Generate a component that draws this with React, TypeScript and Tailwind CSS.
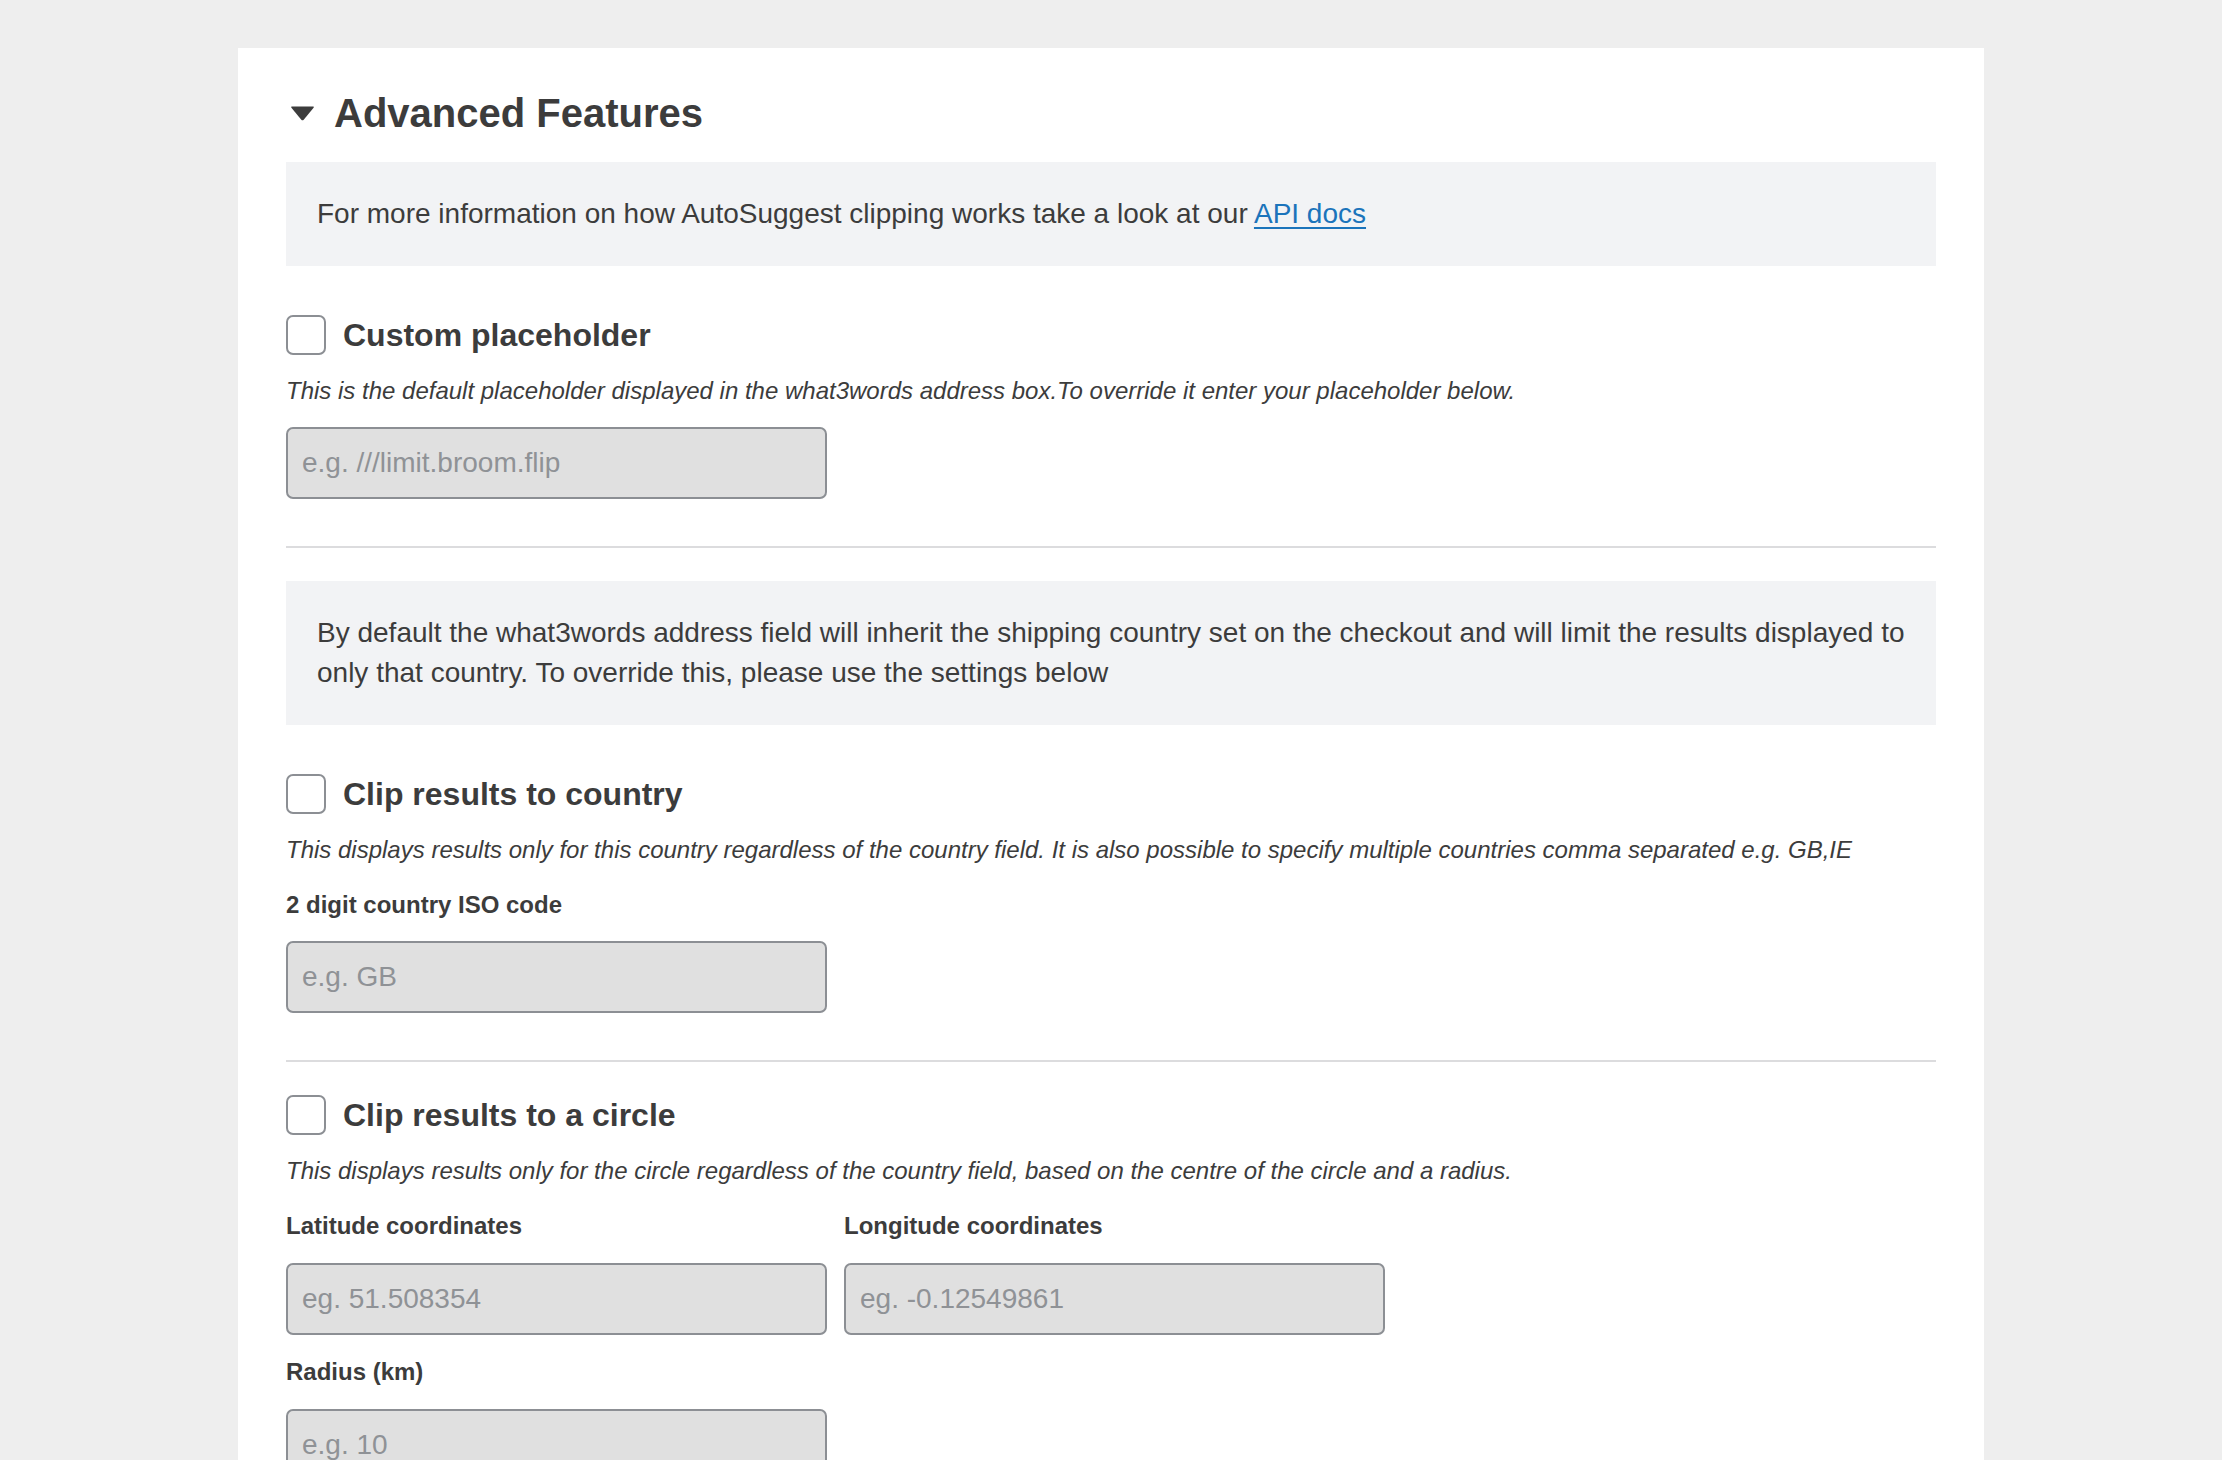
import React from "react";

const font = "font-['Liberation_Sans',Arial,Helvetica,sans-serif]";

function Checkbox() {
  return (
    <span className="block h-[40px] w-[40px] shrink-0 rounded-[7px] border-2 border-[#8c8f94] bg-white" />
  );
}

function CheckRow({ label }: { label: string }) {
  return (
    <label className="flex items-center gap-[17px]">
      <Checkbox />
      <span className="text-[32px] font-bold leading-[40px] text-[#3c3c3c]">{label}</span>
    </label>
  );
}

function Desc({ children }: { children: React.ReactNode }) {
  return <p className="mt-[19px] text-[24px] italic leading-[34px] text-[#3c3c3c]">{children}</p>;
}

function FieldLabel({ children }: { children: React.ReactNode }) {
  return <div className="text-[24px] font-bold leading-[34px] text-[#3c3c3c]">{children}</div>;
}

function Input({ placeholder }: { placeholder: string }) {
  return (
    <input
      type="text"
      placeholder={placeholder}
      className={`${font} block h-[72px] w-[541px] rounded-[7px] border-2 border-[#8c8f94] bg-[#e0e0e0] px-[14px] text-[28px] text-[#3c3c3c] outline-none placeholder:text-[#8f9296]`}
    />
  );
}

export default function App() {
  return (
    <div className={`${font} min-h-screen bg-[#eeeeee] pt-[48px]`}>
      <div className="ml-[238px] w-[1746px] bg-white px-[48px] pb-[80px] pt-[41px]">
        <div className="flex items-center gap-[19px]">
          <svg width="25" height="16" viewBox="0 0 25 16" className="ml-[4px]">
            <path d="M2 1.5 H23 Q24.5 1.5 23.6 2.8 L13.7 14.7 Q12.5 16 11.3 14.7 L1.4 2.8 Q0.5 1.5 2 1.5 Z" fill="#3c3c3c" />
          </svg>
          <h2 className="text-[40px] font-bold leading-[48px] text-[#3c3c3c]">Advanced Features</h2>
        </div>

        <div className="mt-[25px] bg-[#f2f3f5] px-[31px] py-[32px] text-[28px] leading-[40px] text-[#3c3c3c]">
          For more information on how AutoSuggest clipping works take a look at our{" "}
          <a href="#" className="text-[#1b74bb] underline underline-offset-[4px]">
            API docs
          </a>
        </div>

        <div className="mt-[49px]">
          <CheckRow label="Custom placeholder" />
          <Desc>
            This is the default placeholder displayed in the what3words address box.To override it enter your placeholder below.
          </Desc>
          <div className="mt-[19px]">
            <Input placeholder="e.g. ///limit.broom.flip" />
          </div>
        </div>

        <div className="mb-[33px] mt-[47px] h-[2px] bg-[#dcdcde]" />

        <div className="bg-[#f2f3f5] px-[31px] py-[32px] text-[28px] leading-[40px] text-[#3c3c3c]">
          By default the what3words address field will inherit the shipping country set on the checkout and will limit the results displayed to only that country. To override this, please use the settings below
        </div>

        <div className="mt-[49px]">
          <CheckRow label="Clip results to country" />
          <Desc>
            This displays results only for this country regardless of the country field. It is also possible to specify multiple countries comma separated e.g. GB,IE
          </Desc>
          <div className="mt-[21px]">
            <FieldLabel>2 digit country ISO code</FieldLabel>
          </div>
          <div className="mt-[19px]">
            <Input placeholder="e.g. GB" />
          </div>
        </div>

        <div className="mb-[33px] mt-[47px] h-[2px] bg-[#dcdcde]" />

        <div>
          <CheckRow label="Clip results to a circle" />
          <Desc>
            This displays results only for the circle regardless of the country field, based on the centre of the circle and a radius.
          </Desc>
          <div className="mt-[21px] flex gap-[17px]">
            <div className="flex flex-col gap-[20px]">
              <FieldLabel>Latitude coordinates</FieldLabel>
              <Input placeholder="eg. 51.508354" />
            </div>
            <div className="flex flex-col gap-[20px]">
              <FieldLabel>Longitude coordinates</FieldLabel>
              <Input placeholder="eg. -0.12549861" />
            </div>
          </div>
          <div className="mt-[20px] flex flex-col gap-[20px]">
            <FieldLabel>Radius (km)</FieldLabel>
            <Input placeholder="e.g. 10" />
          </div>
        </div>
      </div>
    </div>
  );
}
